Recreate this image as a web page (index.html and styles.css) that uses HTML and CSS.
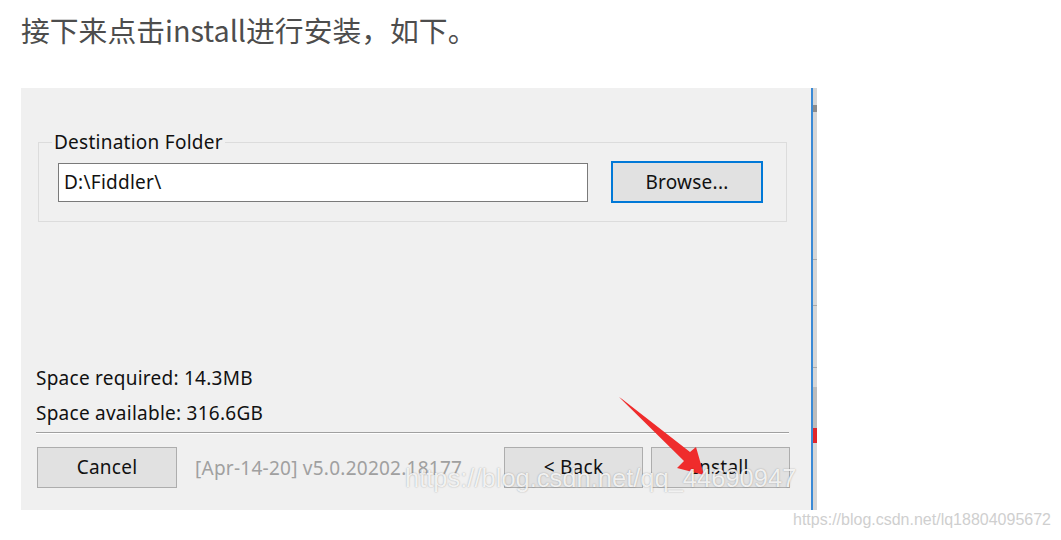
FILE: index.html
```html
<!DOCTYPE html>
<html lang="zh-CN">
<head>
<meta charset="utf-8">
<title>Fiddler 安装</title>
<link rel="stylesheet" href="styles.css">
</head>
<body>
<p class="lead">接下来点击install进行安装，如下。</p>
<div class="shot">
  <div class="dialog">
    <fieldset class="group">
      <legend class="group-title">Destination Folder</legend>
      <div class="path-row">
        <div class="path-input">D:\Fiddler\</div>
        <div class="btn btn-focus">Browse...</div>
      </div>
    </fieldset>
    <div class="space-info">
      <div class="space-line">Space required: 14.3MB</div>
      <div class="space-line">Space available: 316.6GB</div>
    </div>
    <div class="separator"></div>
    <div class="button-row">
      <div class="btn btn-cancel">Cancel</div>
      <div class="version">[Apr-14-20] v5.0.20202.18177</div>
      <div class="btn btn-back">&lt; Back</div>
      <div class="btn btn-install">Install</div>
    </div>
  </div>
  <div class="edge-line"></div>
  <div class="edge-strip"></div>
  <svg class="arrow" viewBox="21 88 796 422" width="796" height="422" aria-hidden="true">
    <polygon points="619,397 622,399 690,452 696,447 704,475 677,468 684,461" fill="#ef2c2c"/>
  </svg>
  <div class="wm-img">https://blog.csdn.net/qq_44690947</div>
</div>
<div class="wm-page">https://blog.csdn.net/lq18804095672</div>
</body>
</html>
```
FILE: styles.css
```css
html, body {
  margin: 0;
  padding: 0;
  background: #ffffff;
}
body {
  position: relative;
  width: 1061px;
  height: 540px;
  overflow: hidden;
}
.lead {
  margin: 0;
  padding: 12px 0 0 21px;
  height: 74px;
  box-sizing: border-box;
  font-family: "Noto Sans CJK SC", "Noto Sans", sans-serif;
  font-size: 28.8px;
  line-height: 36px;
  color: #4d4d4d;
}
.shot {
  position: relative;
  display: flex;
  margin: 14px 0 0 21px;
  width: 796px;
  height: 422px;
}
.dialog {
  flex: 1;
  display: flex;
  flex-direction: column;
  background: #f0f0f0;
  font-family: "Noto Sans", "DejaVu Sans", sans-serif;
  font-size: 19px;
  letter-spacing: 0.25px;
  color: #111;
}
.edge-line {
  width: 2px;
  background: #3a8ad6;
}
.edge-strip {
  width: 4px;
  background: linear-gradient(to bottom,
    #d6d6d6 0, #d6d6d6 17px,
    #8c8c8c 17px, #8c8c8c 24px,
    #d6d6d6 24px, #d6d6d6 171px,
    #aaaaaa 171px, #aaaaaa 172px,
    #d6d6d6 172px, #d6d6d6 217px,
    #aaaaaa 217px, #aaaaaa 218px,
    #d6d6d6 218px, #d6d6d6 279px,
    #aaaaaa 279px, #aaaaaa 280px,
    #d6d6d6 280px, #d6d6d6 299px,
    #bcbcbc 299px, #bcbcbc 340px,
    #e0262b 340px, #e0262b 355px,
    #d6d6d6 355px, #d6d6d6 100%);
}
.group {
  margin: 43px 24px 0 17px;
  padding: 8px 23px 18px 19px;
  border: 1px solid #dcdcdc;
  min-width: 0;
}
.group-title {
  margin-left: -6px;
  padding: 0 2px;
  line-height: 22px;
}
.path-row {
  display: flex;
  align-items: center;
  gap: 23px;
}
.path-input {
  flex: 1;
  height: 39px;
  box-sizing: border-box;
  border: 1px solid #7a7a7a;
  background: #ffffff;
  padding-left: 5px;
  line-height: 37px;
}
.btn {
  box-sizing: border-box;
  background: #e1e1e1;
  border: 1px solid #adadad;
  text-align: center;
  height: 41px;
  line-height: 39px;
}
.btn-focus {
  width: 152px;
  height: 42px;
  border: 2px solid #0078d7;
  line-height: 38px;
}
.space-info {
  margin-top: auto;
  padding-left: 15px;
}
.space-line {
  line-height: 35px;
}
.separator {
  margin: 1px 22px 0 15px;
  border-top: 1px solid #a0a0a0;
  border-bottom: 1px solid #ffffff;
}
.button-row {
  display: flex;
  align-items: center;
  margin: 13px 21px 22px 16px;
}
.btn-cancel {
  width: 140px;
}
.version {
  margin-left: 18px;
  margin-right: auto;
  color: #a0a0a0;
}
.btn-back {
  width: 139px;
}
.btn-install {
  width: 139px;
  margin-left: 8px;
}
.arrow {
  position: absolute;
  left: 0;
  top: 0;
}
.wm-img {
  position: absolute;
  left: 384px;
  top: 375px;
  font-family: "Liberation Sans", Arial, sans-serif;
  font-size: 25.5px;
  line-height: 30px;
  color: rgba(255, 255, 255, 0.85);
  text-shadow: 0 0 1.5px rgba(0, 0, 0, 0.35);
  white-space: nowrap;
}
.wm-page {
  position: absolute;
  left: 793px;
  top: 511px;
  font-family: "Liberation Sans", Arial, sans-serif;
  font-size: 16px;
  line-height: 18px;
  color: #cfcfcf;
  white-space: nowrap;
}
```
